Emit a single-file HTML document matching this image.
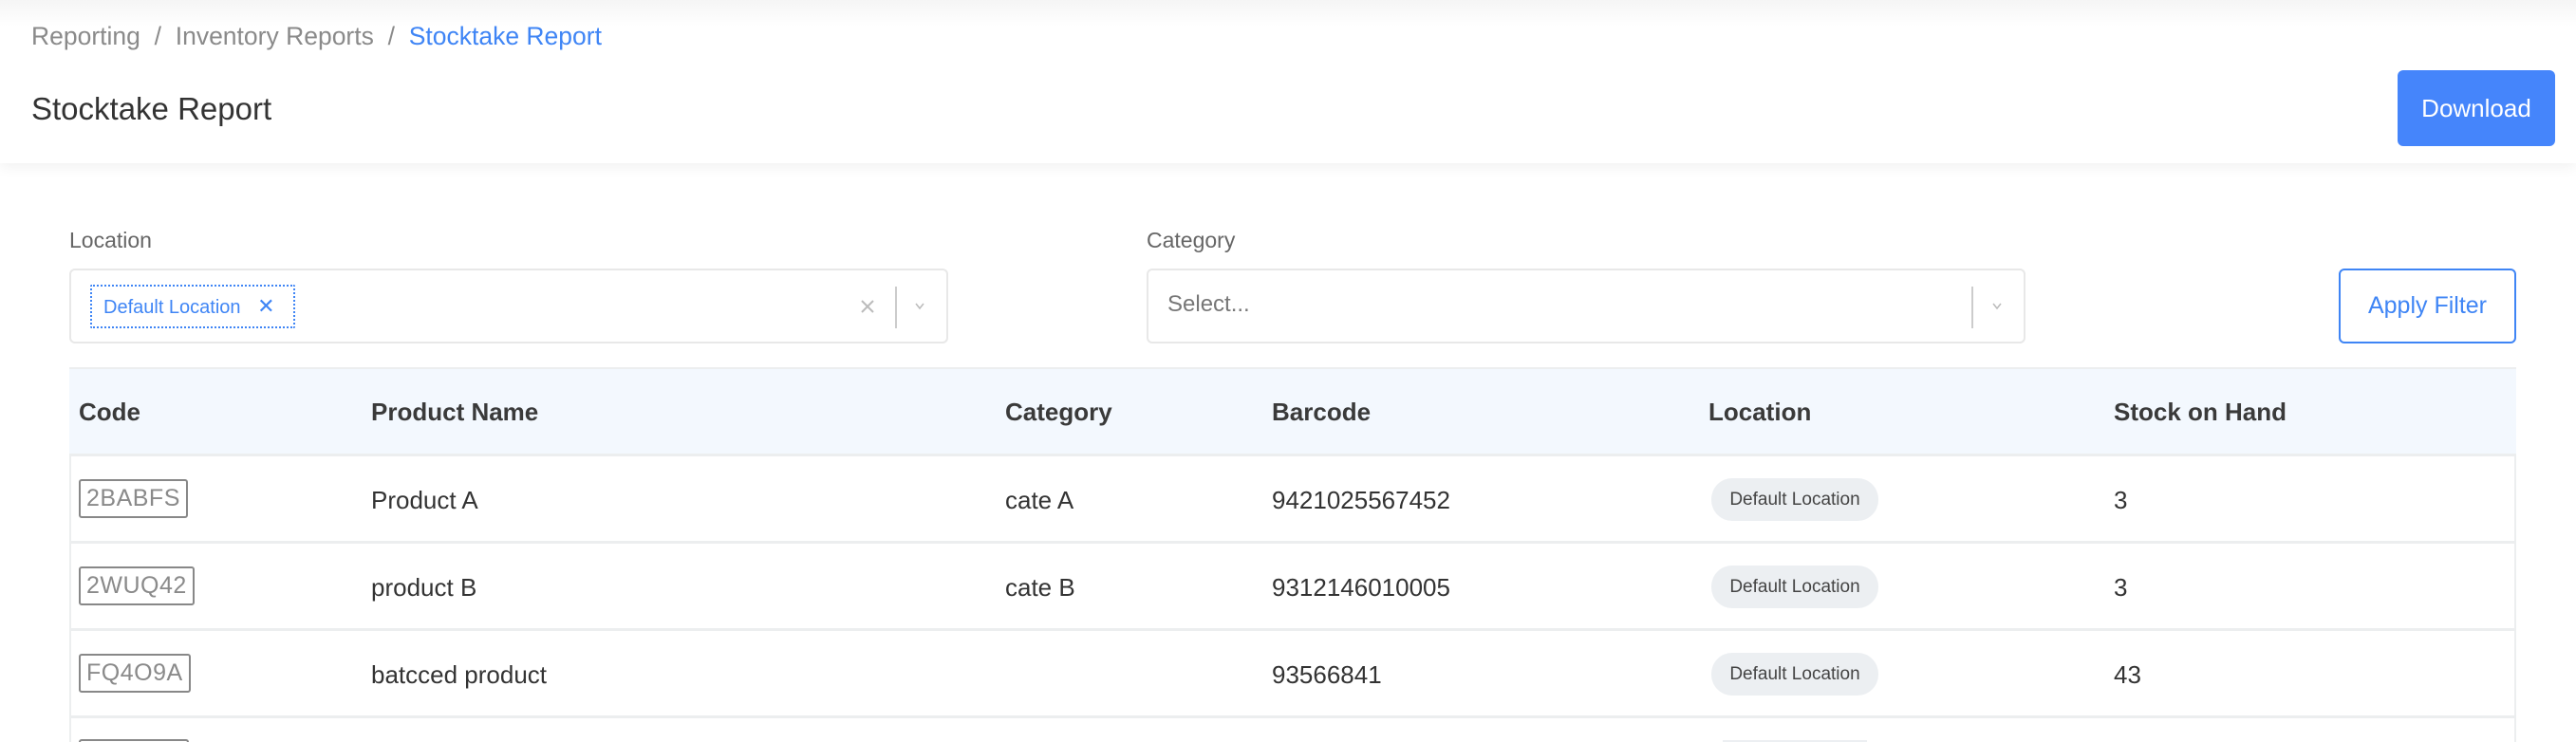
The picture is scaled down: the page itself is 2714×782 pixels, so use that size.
<!DOCTYPE html>
<html style="width:2714px;height:782px;overflow:hidden"><head><style>
*{margin:0;padding:0;box-sizing:border-box}
body{width:2714px;height:782px;background:#fff;font-family:"Liberation Sans",sans-serif;position:relative;overflow:hidden;color:#333}
.a{position:absolute;white-space:nowrap}
.hdr{position:absolute;left:0;top:0;width:2714px;height:172px;background:#fff;box-shadow:0 4px 14px rgba(0,0,0,0.06)}
.top{position:absolute;left:0;top:0;width:2714px;height:28px;background:linear-gradient(#f5f5f5,#fff)}
.sel{position:absolute;top:283px;height:79px;border:2px solid #e8e8e8;border-radius:6px;background:#fff}
.th{font-weight:bold;font-size:26px;color:#3a3a3a}
.td{font-size:26px;color:#333}
.code{position:absolute;left:83px;height:41px;border:2px solid #888;border-radius:3px;color:#8a8a8a;font-size:25px;padding:0 6px;line-height:37px;letter-spacing:0.5px}
.pill{position:absolute;left:1803px;width:176px;height:45px;background:#eceff2;border-radius:22px;font-size:19px;color:#444;text-align:center;line-height:45px}
.line{position:absolute;left:73px;width:2578px;height:3px;background:#eceeef}
</style></head><body>
<div class="hdr"></div><div class="top"></div>
<div class="a" style="left:33px;top:23px;font-size:26.5px;color:#8a8a8a">Reporting &nbsp;/&nbsp; Inventory Reports &nbsp;/&nbsp; <span style="color:#3f85f5">Stocktake Report</span></div>
<div class="a" style="left:33px;top:96px;font-size:33px;color:#333">Stocktake Report</div>
<div class="a" style="left:2526px;top:74px;width:166px;height:80px;background:#4585fb;border-radius:6px;color:#fff;font-size:26px;text-align:center;line-height:80px">Download</div>

<div class="a" style="left:73px;top:240px;font-size:23px;color:#666">Location</div>
<div class="sel" style="left:73px;width:926px">
 <div class="a" style="left:20px;top:15px;width:216px;height:46px;border:2px dotted #3f85f5;border-radius:2px;color:#3f85f5;font-size:20px;line-height:42px;padding-left:12px">Default Location <span style="margin-left:12px;font-size:22px">✕</span></div>
 <svg class="a" style="left:832px;top:31px" width="14" height="14" viewBox="0 0 14 14"><path d="M1 1L13 13M13 1L1 13" stroke="#bbb" stroke-width="2"/></svg>
 <div class="a" style="left:868px;top:17px;width:2px;height:44px;background:#ccc"></div>
 <svg class="a" style="left:889px;top:34px" width="10" height="8" viewBox="0 0 10 8"><path d="M1 1L5 6L9 1" stroke="#bbb" stroke-width="1.5" fill="none"/></svg>
</div>
<div class="a" style="left:1208px;top:240px;font-size:23px;color:#666">Category</div>
<div class="sel" style="left:1208px;width:926px">
 <div class="a" style="left:20px;top:22px;font-size:24px;color:#777">Select...</div>
 <div class="a" style="left:867px;top:17px;width:2px;height:44px;background:#ccc"></div>
 <svg class="a" style="left:889px;top:34px" width="10" height="8" viewBox="0 0 10 8"><path d="M1 1L5 6L9 1" stroke="#bbb" stroke-width="1.5" fill="none"/></svg>
</div>
<div class="a" style="left:2464px;top:283px;width:187px;height:79px;border:2px solid #3f85f5;border-radius:6px;color:#3f85f5;font-size:25px;text-align:center;line-height:75px">Apply Filter</div>

<div class="a" style="left:73px;top:387px;width:2578px;height:395px;border-left:2px solid #eceeef;border-right:2px solid #eceeef"></div>
<div class="a" style="left:73px;top:387px;width:2578px;height:92px;background:#f3f8fe;border-top:2px solid #eceeef"></div>
<div class="a th" style="left:83px;top:419px">Code</div>
<div class="a th" style="left:391px;top:419px">Product Name</div>
<div class="a th" style="left:1059px;top:419px">Category</div>
<div class="a th" style="left:1340px;top:419px">Barcode</div>
<div class="a th" style="left:1800px;top:419px">Location</div>
<div class="a th" style="left:2227px;top:419px">Stock on Hand</div>
<div class="line" style="top:478px"></div>
<div class="line" style="top:570px"></div>
<div class="line" style="top:662px"></div>
<div class="line" style="top:754px"></div>

<div class="code" style="top:505px">2BABFS</div>
<div class="a td" style="left:391px;top:512px">Product A</div>
<div class="a td" style="left:1059px;top:512px">cate A</div>
<div class="a td" style="left:1340px;top:512px">9421025567452</div>
<div class="pill" style="top:504px">Default Location</div>
<div class="a td" style="left:2227px;top:512px">3</div>

<div class="code" style="top:597px">2WUQ42</div>
<div class="a td" style="left:391px;top:604px">product B</div>
<div class="a td" style="left:1059px;top:604px">cate B</div>
<div class="a td" style="left:1340px;top:604px">9312146010005</div>
<div class="pill" style="top:596px">Default Location</div>
<div class="a td" style="left:2227px;top:604px">3</div>

<div class="code" style="top:689px">FQ4O9A</div>
<div class="a td" style="left:391px;top:696px">batcced product</div>
<div class="a td" style="left:1340px;top:696px">93566841</div>
<div class="pill" style="top:688px">Default Location</div>
<div class="a td" style="left:2227px;top:696px">43</div>

<div class="a" style="left:83px;top:779px;width:116px;height:3px;border-top:2px solid #888;border-left:2px solid #888;border-right:2px solid #888;border-radius:3px 3px 0 0"></div>
<div class="a" style="left:1815px;top:780px;width:152px;height:2px;background:#eceff2"></div>
</body></html>
